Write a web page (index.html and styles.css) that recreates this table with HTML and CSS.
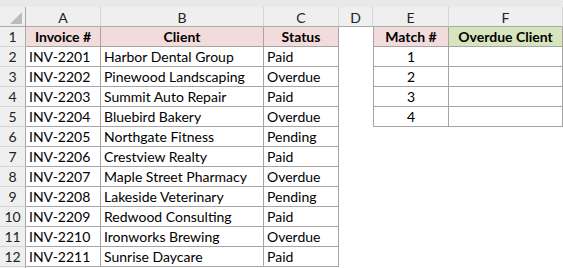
FILE: index.html
```html
<!DOCTYPE html>
<html>
<head>
<meta charset="utf-8">
<link rel="stylesheet" href="styles.css">
</head>
<body>
<div class="topstrip"></div>
<div class="sheet">
  <div class="corner"><svg width="26" height="20" viewBox="0 0 26 20"><polygon points="22,5 22,17 10,17" fill="#bcbcbc"/></svg></div>
  <div class="colhead">A</div>
  <div class="colhead">B</div>
  <div class="colhead">C</div>
  <div class="colhead">D</div>
  <div class="colhead">E</div>
  <div class="colhead last">F</div>

  <div class="rowhead">1</div>
  <div class="cell hdr pink first">Invoice #</div>
  <div class="cell hdr pink">Client</div>
  <div class="cell hdr pink">Status</div>
  <div class="gap"></div>
  <div class="cell hdr pink ecol">Match #</div>
  <div class="cell hdr green">Overdue Client</div>

  <div class="rowhead">2</div>
  <div class="cell first">INV-2201</div>
  <div class="cell">Harbor Dental Group</div>
  <div class="cell">Paid</div>
  <div class="gap"></div>
  <div class="cell ecol num">1</div>
  <div class="cell"></div>

  <div class="rowhead">3</div>
  <div class="cell first">INV-2202</div>
  <div class="cell">Pinewood Landscaping</div>
  <div class="cell">Overdue</div>
  <div class="gap"></div>
  <div class="cell ecol num">2</div>
  <div class="cell"></div>

  <div class="rowhead">4</div>
  <div class="cell first">INV-2203</div>
  <div class="cell">Summit Auto Repair</div>
  <div class="cell">Paid</div>
  <div class="gap"></div>
  <div class="cell ecol num">3</div>
  <div class="cell"></div>

  <div class="rowhead">5</div>
  <div class="cell first">INV-2204</div>
  <div class="cell">Bluebird Bakery</div>
  <div class="cell">Overdue</div>
  <div class="gap"></div>
  <div class="cell ecol num">4</div>
  <div class="cell"></div>

  <div class="rowhead">6</div>
  <div class="cell first">INV-2205</div>
  <div class="cell">Northgate Fitness</div>
  <div class="cell">Pending</div>
  <div class="blank"></div>

  <div class="rowhead">7</div>
  <div class="cell first">INV-2206</div>
  <div class="cell">Crestview Realty</div>
  <div class="cell">Paid</div>
  <div class="blank"></div>

  <div class="rowhead">8</div>
  <div class="cell first">INV-2207</div>
  <div class="cell">Maple Street Pharmacy</div>
  <div class="cell">Overdue</div>
  <div class="blank"></div>

  <div class="rowhead">9</div>
  <div class="cell first">INV-2208</div>
  <div class="cell">Lakeside Veterinary</div>
  <div class="cell">Pending</div>
  <div class="blank"></div>

  <div class="rowhead">10</div>
  <div class="cell first">INV-2209</div>
  <div class="cell">Redwood Consulting</div>
  <div class="cell">Paid</div>
  <div class="blank"></div>

  <div class="rowhead">11</div>
  <div class="cell first">INV-2210</div>
  <div class="cell">Ironworks Brewing</div>
  <div class="cell">Overdue</div>
  <div class="blank"></div>

  <div class="rowhead">12</div>
  <div class="cell first">INV-2211</div>
  <div class="cell">Sunrise Daycare</div>
  <div class="cell">Paid</div>
  <div class="blank"></div>

  <div class="rowhead tail"></div>
</div>
</body>
</html>
```
FILE: styles.css
```css
html, body {
  margin: 0;
  padding: 0;
  background: #ffffff;
}
body {
  width: 563px;
  height: 268px;
  overflow: hidden;
  font-family: Lato, "Liberation Sans", sans-serif;
  font-size: 14px;
  color: #000;
}
.topstrip {
  height: 7px;
  background: #e9e9e9;
}
.sheet {
  display: grid;
  grid-template-columns: 26px 75px 163px 75px 34px 76px 114px;
  grid-template-rows: repeat(13, 20px) 1px;
}
.corner {
  background: #efefef;
  border-right: 1px solid #a9a9a9;
  border-bottom: 1px solid #a9a9a9;
  box-sizing: border-box;
}
.corner svg { display: block; }
.colhead {
  box-sizing: border-box;
  background: #efefef;
  border-right: 1px solid #d4d4d4;
  border-bottom: 1px solid #a9a9a9;
  display: flex;
  align-items: center;
  justify-content: center;
  color: #222;
  font-size: 14px;
  padding-top: 1px;
}
.rowhead {
  box-sizing: border-box;
  background: #efefef;
  border-right: 1px solid #a9a9a9;
  border-bottom: 1px solid #d4d4d4;
  display: flex;
  align-items: center;
  justify-content: center;
  color: #222;
  font-size: 14px;
  grid-column: 1;
}
.rowhead.tail { border-bottom: none; }
.cell {
  box-sizing: border-box;
  border-right: 1px solid #a5a5a5;
  border-bottom: 1px solid #a5a5a5;
  display: flex;
  align-items: center;
  padding-left: 3px;
  white-space: nowrap;
  overflow: hidden;
}
.cell.ecol { border-left: 1px solid #a5a5a5; }
.cell.num { justify-content: center; padding-left: 0; }
.cell.hdr {
  font-weight: bold;
  justify-content: center;
  padding-left: 0;
}
.pink { background: #f2dcdb; }
.green { background: #d8e4bc; }
.blank { grid-column: span 3; }
```
